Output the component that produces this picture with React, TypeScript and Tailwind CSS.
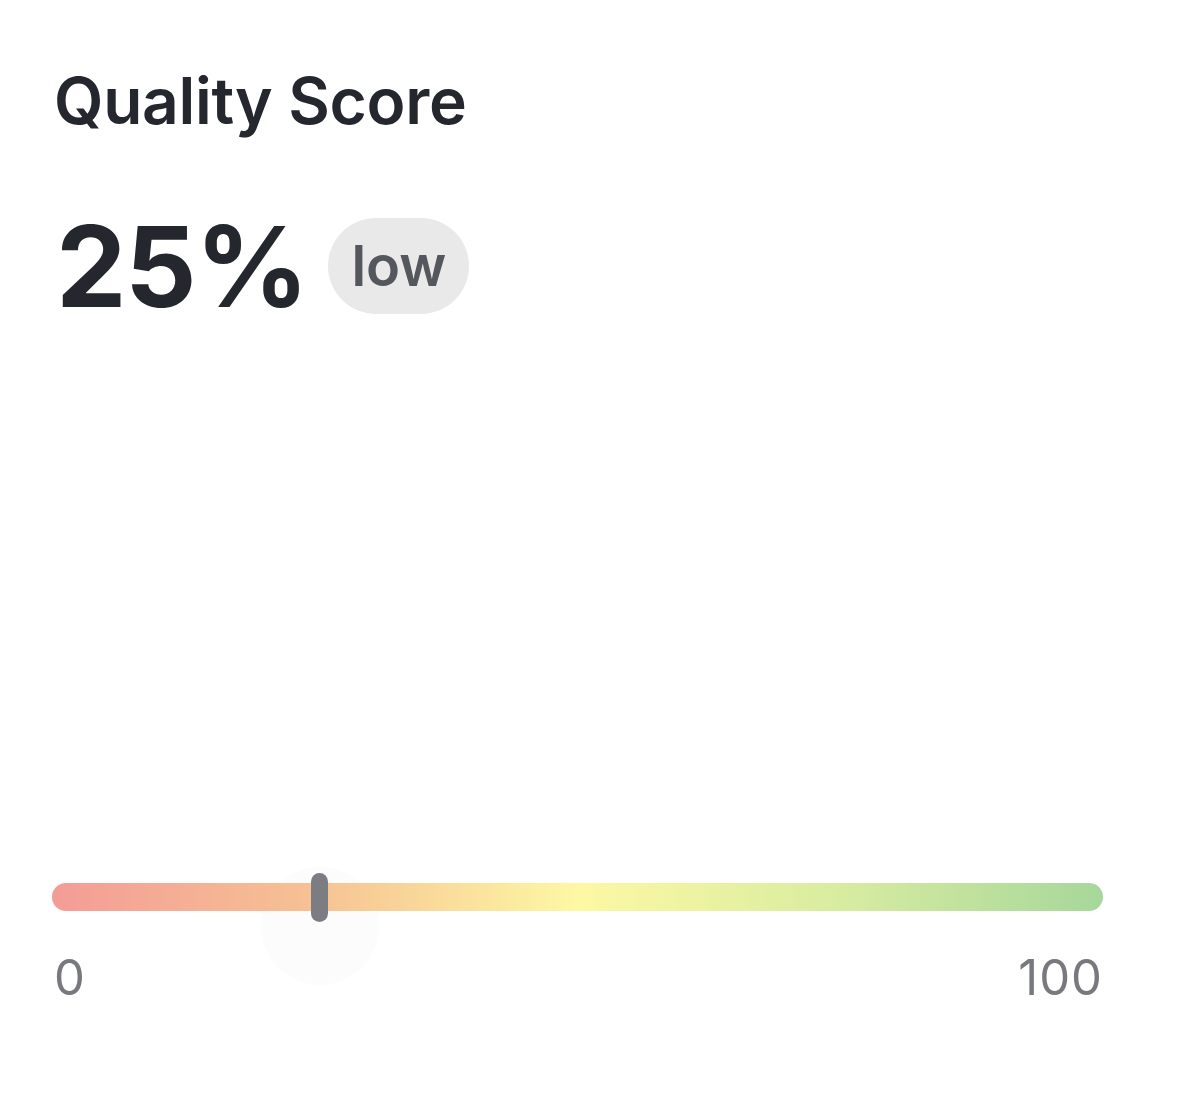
export default function App() {
  const score = 25

  return (
    <div className="min-h-screen bg-white font-['Inter',sans-serif]">
      <div className="w-[1186px] px-[52px] pt-[69px]">
        <h2 className="text-[64px] leading-none font-semibold text-[#25272e] tracking-[-0.3px] pl-[2px]">
          Quality Score
        </h2>

        <div className="mt-[77px] flex items-center gap-[21px] pl-[4px]">
          <span className="text-[112px] leading-none font-bold text-[#25272e] tracking-[-1.5px]">{score}%</span>
          <span className="h-[96px] px-[23px] flex items-center rounded-full bg-[#e9e9e9] text-[56px] font-semibold text-[#55575e] leading-none">
            low
          </span>
        </div>

        {/* slider */}
        <div className="mt-[561px] relative w-[1051px] h-[28px]">
          <div
            className="absolute w-[118px] h-[118px] rounded-full bg-[#fcfcfc]"
            style={{ left: `calc(${score}% + 5px - 59px)`, top: '-16px' }}
          />
          <div className="relative h-full w-full rounded-full bg-[linear-gradient(90deg,#f39c96_0%,#f6c293_25%,#fdf8a4_50%,#d8eca0_75%,#a6d79a_100%)]" />
          <div
            className="absolute top-[-10px] w-[17px] h-[49px] rounded-full bg-[#7b7d82]"
            style={{ left: `calc(${score}% - 4px)` }}
          />
        </div>

        <div className="relative mt-[42px] w-[1051px] flex justify-between text-[49px] leading-none text-[#77797e]">
          <span className="pl-[2px]">0</span>
          <span className="tracking-[1px]">100</span>
        </div>
      </div>
    </div>
  )
}
